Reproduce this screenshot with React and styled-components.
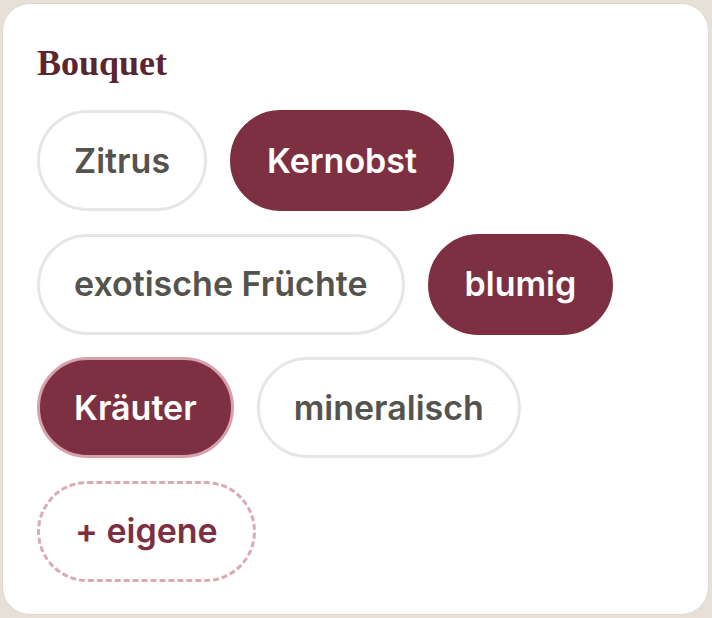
import styled, { createGlobalStyle } from 'styled-components';

const GlobalStyle = createGlobalStyle`
    html, body {
        margin: 0;
        padding: 0;
        background: #e7e0d7;
    }
    body {
        width: 712px;
        height: 618px;
        overflow: hidden;
    }
`

const Card = styled.section`
    box-sizing: border-box;
    margin: 3px 2px 0 2px;
    width: 707px;
    height: 612px;
    background: #fff;
    border: 1px solid #ddd8d1;
    border-radius: 28px;
    padding: 38px 34px;
`

const Title = styled.h2`
    margin: 0 0 25px 0;
    font-family: 'Liberation Serif', serif;
    font-weight: 700;
    font-size: 36px;
    line-height: 43px;
    color: #5b2530;
`

const ChipList = styled.div`
    display: flex;
    flex-wrap: wrap;
    row-gap: 22.5px;
    column-gap: 23px;
    width: 620px;
`

const Chip = styled.button`
    box-sizing: border-box;
    height: 101px;
    padding: 0 34px;
    border-radius: 999px;
    font-family: 'Inter', sans-serif;
    font-weight: 600;
    font-size: 34px;
    line-height: 40px;
    cursor: pointer;
    border: 3px solid #e6e6e6;
    background: #fff;
    color: #55534d;

    ${p => p.$active && `
        background: #7c3042;
        border-color: #7c3042;
        color: #fff;
    `}
    ${p => p.$focused && `
        border-color: #d7a1ab;
    `}
    ${p => p.$add && `
        border: 3px dashed #ddaab3;
        color: #7c3042;
        padding: 0 35px;
    `}
`

const tags = [
    { label: 'Zitrus', active: false },
    { label: 'Kernobst', active: true },
    { label: 'exotische Früchte', active: false },
    { label: 'blumig', active: true },
    { label: 'Kräuter', active: true, focused: true },
    { label: 'mineralisch', active: false },
]

const App = () => {
    return (
        <>
            <GlobalStyle />
            <Card>
                <Title>Bouquet</Title>
                <ChipList>
                    {tags.map(t => (
                        <Chip key={t.label} $active={t.active} $focused={t.focused}>{t.label}</Chip>
                    ))}
                    <Chip $add>+ eigene</Chip>
                </ChipList>
            </Card>
        </>
    )
}

export default App;
